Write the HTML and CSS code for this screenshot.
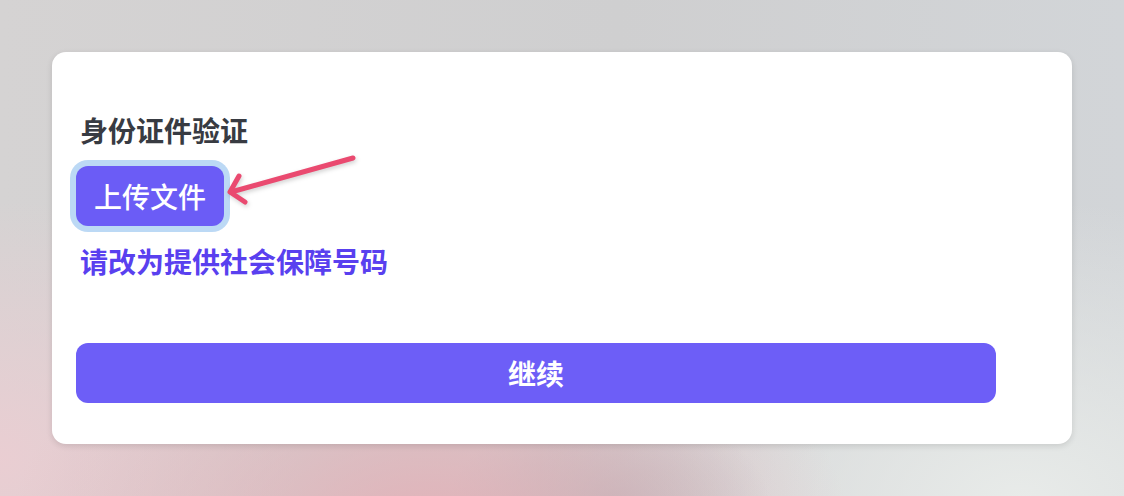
FILE: index.html
```html
<!DOCTYPE html>
<html lang="zh-CN">
<head>
    <meta charset="UTF-8">
    <meta name="viewport" content="width=device-width, initial-scale=1.0">
    <title>身份证件验证</title>
    <link rel="stylesheet" href="styles.css">
</head>
<body>

    <div class="card">
        <h2 class="card-title">身份证件验证</h2>

        <div class="upload-row">
            <button class="upload-btn">上传文件</button>
            <!-- pointer drawn over the card -->
            <svg class="pointer" width="150" height="70" viewBox="0 0 150 70">
                <g fill="none" stroke="#ea4a70" stroke-width="5" stroke-linecap="round" stroke-linejoin="round">
                    <path d="M127 4 L5 38"/>
                    <path d="M13 22 L4 38 L19 48"/>
                </g>
            </svg>
        </div>

        <a class="alt-link" href="#">请改为提供社会保障号码</a>

        <button class="continue-btn">继续</button>
    </div>

</body>
</html>
```

FILE: styles.css
```css
html, body {
    height: 100%;
}
body {
    margin: 0;
    padding: 52px;
    box-sizing: border-box;
    font-family: "Noto Sans CJK SC", "Noto Sans", sans-serif;
    background-color: #d6d5d5;
    background-image:
        radial-gradient(ellipse 420px 240px at 430px 530px, rgba(230, 170, 178, 0.8), rgba(230, 170, 178, 0) 100%),
        radial-gradient(ellipse 300px 260px at 0px 460px, rgba(236, 205, 210, 0.9), rgba(236, 205, 210, 0) 100%),
        radial-gradient(ellipse 160px 90px at 610px 500px, rgba(185, 186, 190, 0.9), rgba(185, 186, 190, 0) 100%),
        radial-gradient(ellipse 480px 300px at 1020px 500px, rgba(232, 235, 233, 1), rgba(232, 235, 233, 0) 100%),
        linear-gradient(90deg, #d5d3d3 0%, #cfcfd0 55%, #d2d5d8 100%);
    overflow: hidden;
}
.card {
    background-color: #fff;
    border-radius: 14px;
    padding: 60px 24px 41px 24px;
    box-shadow: 0 2px 6px rgba(0, 0, 0, 0.12);
    display: flex;
    flex-direction: column;
    align-items: flex-start;
}
.card-title {
    margin: 0 0 18px 4px;
    font-size: 28px;
    line-height: 36px;
    font-weight: 700;
    color: #383b42;
}
.upload-row {
    position: relative;
}
.upload-btn {
    width: 148px;
    height: 60px;
    padding: 0;
    border: none;
    border-radius: 12px;
    background-color: #6b5cf6;
    color: #fff;
    font-family: inherit;
    font-size: 28px;
    font-weight: 500;
    box-shadow: 0 0 0 6px #bcd9f5;
    cursor: pointer;
}
.pointer {
    position: absolute;
    left: 150px;
    top: -12px;
    filter: drop-shadow(1px 2px 2px rgba(0, 0, 0, 0.18));
}
.alt-link {
    margin: 17px 0 0 4px;
    font-size: 28px;
    line-height: 36px;
    font-weight: 700;
    color: #5940ef;
    text-decoration: none;
}
.continue-btn {
    margin-top: 64px;
    width: 920px;
    height: 60px;
    border: none;
    border-radius: 12px;
    background-color: #6d5ef7;
    color: #fff;
    font-family: inherit;
    font-size: 28px;
    font-weight: 700;
    cursor: pointer;
}
```
